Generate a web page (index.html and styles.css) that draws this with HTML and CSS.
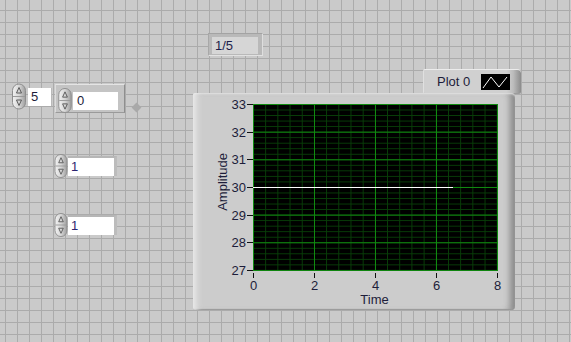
FILE: index.html
```html
<!DOCTYPE html>
<html lang="en">
  <head>
    <meta charset="UTF-8" />
    <title>Front Panel</title>
    <link rel="stylesheet" href="styles.css">
  </head>
  <body>
    <svg class="sprite" width="0" height="0">
      <defs>
        <linearGradient id="spinFill" x1="0" x2="1" y1="0" y2="0">
          <stop offset="0" stop-color="#f2f2f2" />
          <stop offset="0.5" stop-color="#d6d6d6" />
          <stop offset="1" stop-color="#9e9e9e" />
        </linearGradient>
        <symbol id="spin" viewBox="0 0 14 26">
          <path d="M0.5 7 A6.5 6.5 0 0 1 13.5 7 V19 A6.5 6.5 0 0 1 0.5 19 Z" fill="url(#spinFill)" stroke="#8e8e8e" />
          <line x1="1" y1="13" x2="13" y2="13" stroke="#9a9a9a" />
          <path d="M7 4 L9.5 9.5 L4.5 9.5 Z" fill="none" stroke="#5a5a5a" />
          <path d="M7 22 L9.5 16.5 L4.5 16.5 Z" fill="none" stroke="#5a5a5a" />
        </symbol>
      </defs>
    </svg>

    <div class="panel">
      <!-- array of numerics -->
      <div class="array">
        <div class="index">
          <svg class="spin" width="14" height="27"><use href="#spin" /></svg>
          <div class="num-box index-box">5</div>
        </div>
        <div class="array-frame">
          <svg class="spin" width="14" height="25"><use href="#spin" /></svg>
          <div class="num-box elem-box">0</div>
        </div>
        <div class="array-handle"></div>
      </div>

      <div class="numeric num-a">
        <svg class="spin" width="14" height="24"><use href="#spin" /></svg>
        <div class="num-box">1</div>
      </div>
      <div class="numeric num-b">
        <svg class="spin" width="14" height="24"><use href="#spin" /></svg>
        <div class="num-box">1</div>
      </div>

      <div class="indicator"><span>1/5</span></div>

      <div class="legend">
        <span>Plot 0</span>
        <svg class="legend-swatch" width="29" height="16" viewBox="0 0 29 16">
          <rect width="29" height="16" fill="#000" />
          <polyline points="2,14 10,3 18,13 26,3" fill="none" stroke="#fff" stroke-width="1" />
        </svg>
      </div>

      <div class="graph">
        <div class="y-title"><span>Amplitude</span></div>
        <div class="y-scale">
          <div class="y-tick">33</div>
          <div class="y-tick">32</div>
          <div class="y-tick">31</div>
          <div class="y-tick">30</div>
          <div class="y-tick">29</div>
          <div class="y-tick">28</div>
          <div class="y-tick">27</div>
        </div>
        <div class="plot">
          <div class="trace" style="top: 83px; width: 200px"></div>
        </div>
        <div class="x-scale">
          <div class="x-tick"><span>0</span></div>
          <div class="x-tick"><span>2</span></div>
          <div class="x-tick"><span>4</span></div>
          <div class="x-tick"><span>6</span></div>
          <div class="x-tick"><span>8</span></div>
        </div>
        <div class="x-title">Time</div>
      </div>
    </div>
  </body>
</html>
```

FILE: styles.css
```css
* {
  margin: 0;
  padding: 0;
  box-sizing: border-box;
}
body {
  font-family: "Liberation Sans", Arial, sans-serif;
  font-size: 13px;
  color: #1d1d3a;
  background-color: #cacaca;
  background-image: linear-gradient(to right, #ababab 1px, transparent 1px),
    linear-gradient(to bottom, #ababab 1px, transparent 1px);
  background-size: 12px 12px;
  background-position: 5px 10px;
  overflow: hidden;
}
.sprite {
  position: absolute;
}
.panel {
  position: relative;
  width: 571px;
  height: 342px;
}
.spin {
  display: block;
  flex: none;
}
.num-box {
  background: #fff;
  height: 19px;
  line-height: 18px;
  padding-left: 3px;
  color: #2b2470;
}

/* array */
.array {
  position: absolute;
  left: 12px;
  top: 83px;
  display: flex;
  align-items: flex-start;
}
.index {
  display: flex;
  align-items: flex-start;
}
.index-box {
  width: 24px;
  height: 18px;
  margin-top: 5px;
  margin-left: 2px;
  border-right: 1px solid #b9b9b9;
  color: #1d1d3a;
}
.array-frame {
  display: flex;
  align-items: flex-end;
  margin-left: 3px;
  margin-top: 1px;
  width: 70px;
  height: 29px;
  padding: 3px 6px 2px 2px;
  gap: 1px;
  background: #c4c4c4;
  border-top: 1px solid #e4e4e4;
  border-left: 1px solid #dcdcdc;
  border-right: 1px solid #8e8e8e;
  border-bottom: 1px solid #9a9a9a;
}
.array-frame .spin {
  align-self: flex-start;
}
.elem-box {
  width: 46px;
  height: 18px;
  padding-left: 4px;
  color: #1d1d3a;
}
.array-handle {
  width: 7px;
  height: 7px;
  margin: 21px 0 0 8px;
  background: #a9a9a9;
  transform: rotate(45deg);
}

/* numerics */
.numeric {
  position: absolute;
  left: 54px;
  display: flex;
  align-items: flex-start;
}
.numeric .num-box {
  width: 49px;
  height: 20px;
  margin-top: 2px;
  border-top: 2px solid #b6b6b6;
  border-right: 3px solid #bcbcbc;
}
.num-a {
  top: 154px;
}
.num-b {
  top: 213px;
}

/* string indicator */
.indicator {
  position: absolute;
  left: 208px;
  top: 33px;
  width: 55px;
  height: 23px;
  padding: 3px 4px 1px 3px;
  background: #b9b9b9;
  border-top: 1px solid #a3a3a3;
  border-left: 1px solid #a8a8a8;
  border-right: 1px solid #dedede;
  border-bottom: 1px solid #e2e2e2;
}
.indicator span {
  display: block;
  height: 100%;
  background: #d6d6d6;
  padding-left: 3px;
  line-height: 17px;
  color: #1d1d4a;
}

/* plot legend */
.legend {
  position: absolute;
  left: 423px;
  top: 69px;
  width: 98px;
  height: 25px;
  display: flex;
  align-items: center;
  padding-left: 13px;
  gap: 11px;
  background: linear-gradient(to right, #d0d0d0 85%, #bcbcbc 92%, #8c8c8c 100%);
  border-top: 1px solid #ececec;
  border-left: 1px solid #e0e0e0;
  border-bottom: 1px solid #9c9c9c;
  border-radius: 2px 4px 2px 2px;
}
.legend-swatch {
  display: block;
}

/* waveform graph */
.graph {
  position: absolute;
  left: 193px;
  top: 93px;
  width: 322px;
  height: 217px;
  display: grid;
  grid-template-columns: 20px 18px 22px 245px;
  grid-template-rows: 167px 22px 16px;
  padding-top: 11px;
  background: #cccccc;
  border-radius: 2px 4px 4px 2px;
  box-shadow: inset 6px 0 6px -3px #ececec, inset 0 2px 2px -1px #e2e2e2,
    inset -8px 0 6px -3px #8a8a8a, inset 0 -2px 1px -1px #8a8a8a;
}
.y-title {
  grid-column: 2;
  grid-row: 1;
  display: flex;
  align-items: center;
  justify-content: center;
  padding-bottom: 11px;
}
.y-title span {
  writing-mode: vertical-rl;
  transform: rotate(180deg);
  white-space: nowrap;
}
.y-scale {
  grid-column: 3;
  grid-row: 1;
  display: flex;
  flex-direction: column;
  justify-content: space-between;
}
.y-tick {
  height: 1px;
  display: flex;
  align-items: center;
  justify-content: flex-end;
  white-space: nowrap;
}
.y-tick::after {
  content: "";
  width: 6px;
  height: 1px;
  margin-left: 1px;
  background: #111;
}
.plot {
  grid-column: 4;
  grid-row: 1;
  position: relative;
  background-color: #000;
  background-image: linear-gradient(to right, #108a10 1px, transparent 1px),
    linear-gradient(to bottom, #108a10 1px, transparent 1px),
    linear-gradient(to right, #083e08 1px, transparent 1px),
    linear-gradient(to bottom, #083e08 1px, transparent 1px);
  background-size: 61px 100%, 100% 27.667px, 12.2px 100%, 100% 5.533px;
}
.trace {
  position: absolute;
  left: 0;
  height: 1px;
  background: #fff;
}
.x-scale {
  grid-column: 4;
  grid-row: 2;
  display: flex;
  justify-content: space-between;
}
.x-tick {
  width: 1px;
  display: flex;
  flex-direction: column;
  align-items: center;
}
.x-tick::before {
  content: "";
  width: 1px;
  height: 5px;
  margin-top: 2px;
  background: #111;
}
.x-tick span {
  line-height: 15px;
}
.x-title {
  grid-column: 4;
  grid-row: 3;
  text-align: center;
  line-height: 14px;
  padding-right: 2px;
}
```
